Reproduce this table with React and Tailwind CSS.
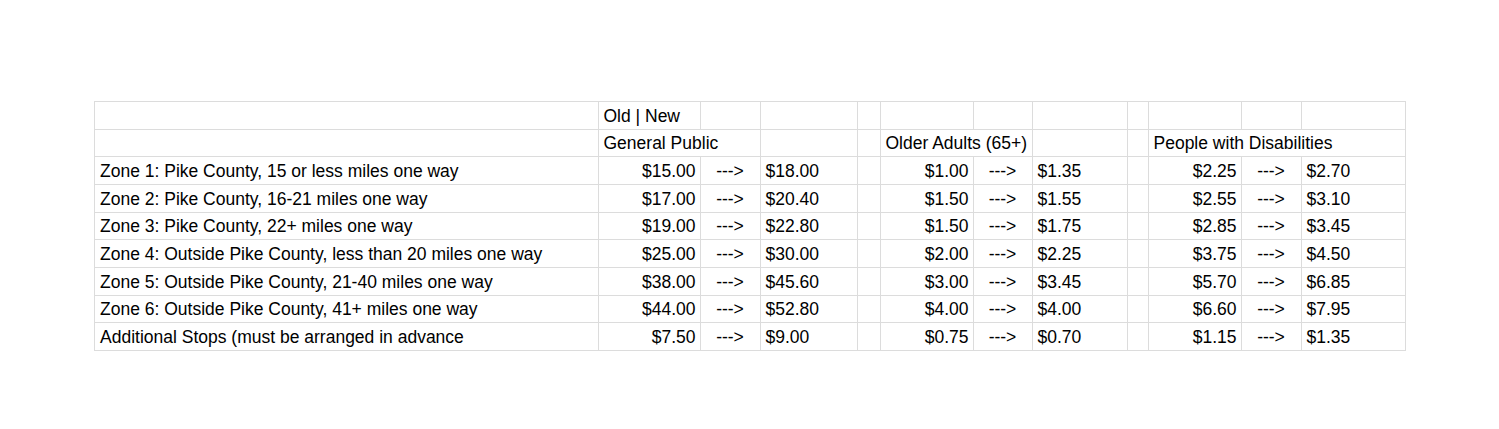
const WIDTHS = [503.5, 102, 60, 97, 23, 93, 59, 95, 21, 93, 60, 104];

const ROWS = [
  ["Zone 1: Pike County, 15 or less miles one way", "$15.00", "$18.00", "$1.00", "$1.35", "$2.25", "$2.70"],
  ["Zone 2: Pike County, 16-21 miles one way", "$17.00", "$20.40", "$1.50", "$1.55", "$2.55", "$3.10"],
  ["Zone 3: Pike County, 22+ miles one way", "$19.00", "$22.80", "$1.50", "$1.75", "$2.85", "$3.45"],
  ["Zone 4: Outside Pike County, less than 20 miles one way", "$25.00", "$30.00", "$2.00", "$2.25", "$3.75", "$4.50"],
  ["Zone 5: Outside Pike County, 21-40 miles one way", "$38.00", "$45.60", "$3.00", "$3.45", "$5.70", "$6.85"],
  ["Zone 6: Outside Pike County, 41+ miles one way", "$44.00", "$52.80", "$4.00", "$4.00", "$6.60", "$7.95"],
  ["Additional Stops (must be arranged in advance", "$7.50", "$9.00", "$0.75", "$0.70", "$1.15", "$1.35"],
];

const cell = "border border-[#dcdcdc] h-[27.67px] p-0 px-[5px] align-bottom pb-[3px] leading-[20px] whitespace-nowrap overflow-hidden";

function Group({ oldV, newV }) {
  return (
    <>
      <td className={`${cell} text-right !pr-[4px]`}>{oldV}</td>
      <td className={`${cell} text-center`}>---&gt;</td>
      <td className={cell}>{newV}</td>
    </>
  );
}

export default function App() {
  return (
    <div className="w-[1499px] h-[429px] bg-white pt-[101px] pl-[94px] text-black text-[17.5px]" style={{ fontFamily: '"Liberation Sans", Arial, sans-serif' }}>
      <table className="table-fixed border-collapse" style={{ width: WIDTHS.reduce((a, b) => a + b, 0) }}>
        <colgroup>
          {WIDTHS.map((w, i) => <col key={i} style={{ width: w }} />)}
        </colgroup>
        <tbody>
          <tr>
            <td className={cell}></td>
            <td className={cell}>Old | New</td>
            {[2, 3, 4, 5, 6, 7, 8, 9, 10, 11].map((i) => <td key={i} className={cell}></td>)}
          </tr>
          <tr>
            <td className={cell}></td>
            <td className={cell} colSpan={2}>General Public</td>
            <td className={cell}></td>
            <td className={cell}></td>
            <td className={cell} colSpan={2}>Older Adults (65+)</td>
            <td className={cell}></td>
            <td className={cell}></td>
            <td className={cell} colSpan={3}>People with Disabilities</td>
          </tr>
          {ROWS.map((r) => (
            <tr key={r[0]}>
              <td className={cell}>{r[0]}</td>
              <Group oldV={r[1]} newV={r[2]} />
              <td className={cell}></td>
              <Group oldV={r[3]} newV={r[4]} />
              <td className={cell}></td>
              <Group oldV={r[5]} newV={r[6]} />
            </tr>
          ))}
        </tbody>
      </table>
    </div>
  );
}
